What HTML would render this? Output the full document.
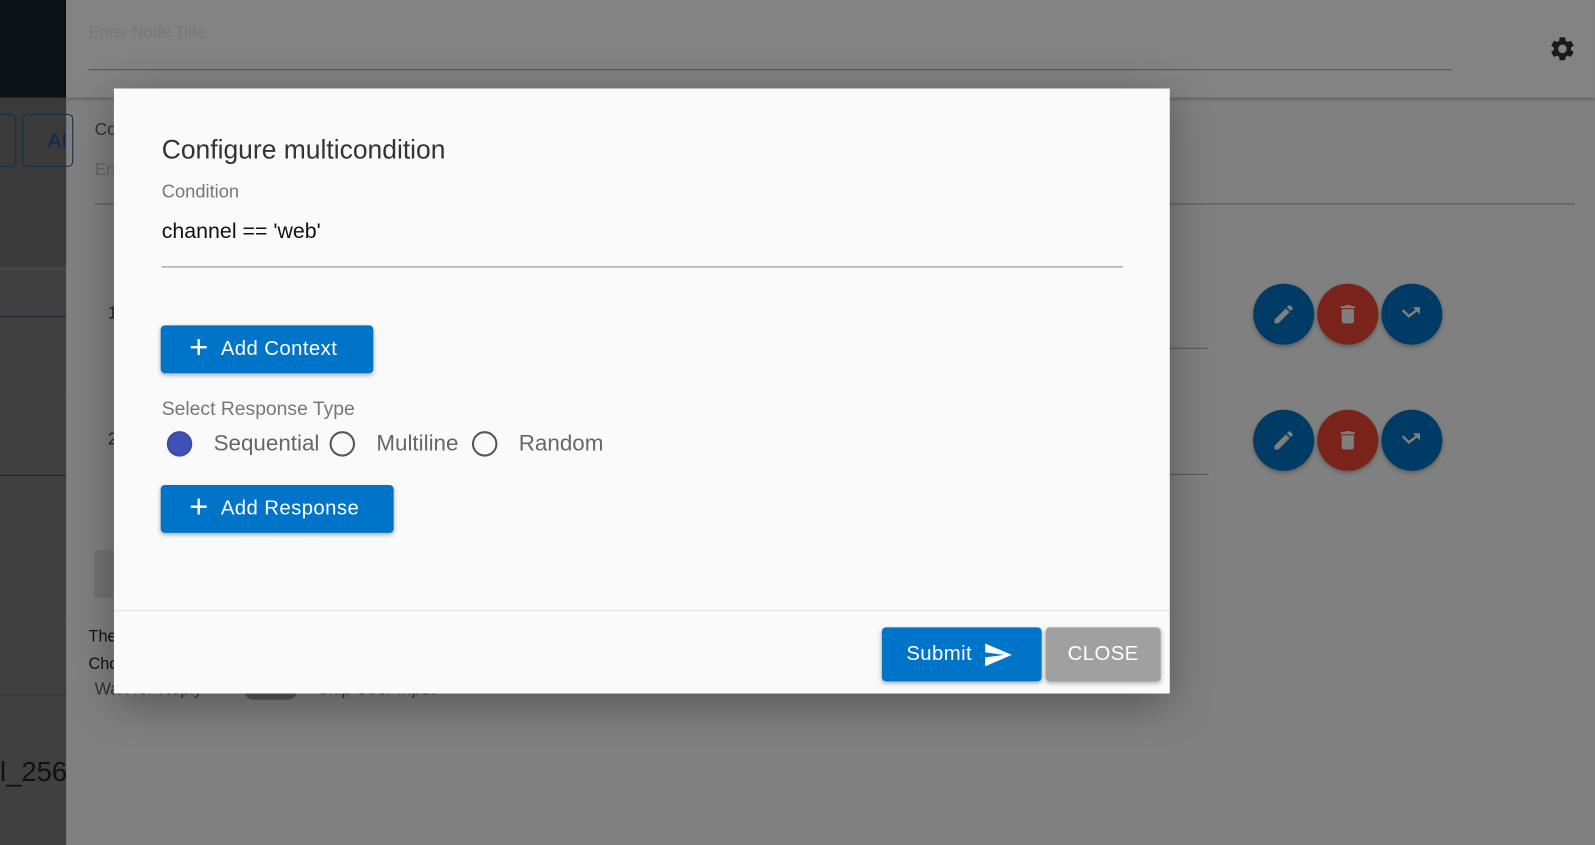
<!DOCTYPE html>
<html><head><style>
*{box-sizing:border-box;margin:0;padding:0}
html,body{width:1595px;height:845px;overflow:hidden;background:#808080;font-family:"Liberation Sans",sans-serif}
#w{position:absolute;left:0;top:0;width:1568px;height:831px;transform:scale(1.0172,1.0169);transform-origin:0 0}
.a{position:absolute}
.fab{position:absolute;width:60px;height:60px;border-radius:50%;box-shadow:0 2px 4px rgba(0,0,0,.3)}
.btn{position:absolute;background:#0074c8;color:#fff;border-radius:4px;font-size:20px;box-shadow:0 2px 4px rgba(0,0,0,.3);display:flex;align-items:center;letter-spacing:.4px}
</style></head><body><div id="w">
<div class="a" style="left:0;top:0;width:65px;height:96px;background:#0d1216"></div>
<div class="a" style="left:0;top:96px;width:65px;height:735px;background:#404040"></div>
<div class="a" style="left:0;top:96px;width:65px;height:165px;background:#3a3a3a"></div>
<div class="a" style="left:0;top:264px;width:65px;height:1px;background:#555"></div>
<div class="a" style="left:0;top:311px;width:65px;height:1px;background:#223"></div>
<div class="a" style="left:0;top:388px;width:65px;height:1px;background:#4a4a4a"></div>
<div class="a" style="left:0;top:467px;width:65px;height:1px;background:#223"></div>
<div class="a" style="left:0;top:610px;width:65px;height:1px;background:#4a4a4a"></div>
<div class="a" style="left:0;top:683px;width:65px;height:1px;background:#333"></div>
<div class="a" style="left:0;top:744px;font-size:27px;color:#111">l_256</div>
<div class="a" style="left:65px;top:0;width:1503px;height:96px;background:#838383;box-shadow:0 2px 4px rgba(0,0,0,.3)"></div>
<div class="a" style="left:87px;top:24px;font-size:16px;color:#777">Enter Node Title</div>
<div class="a" style="left:87px;top:68px;width:1340px;height:1px;background:#555"></div>
<svg class="a" style="left:1522px;top:34px" width="28" height="28" viewBox="0 0 24 24"><path fill="#1a1a1a" d="M19.14 12.94c.04-.3.06-.61.06-.94 0-.32-.02-.64-.07-.94l2.03-1.58a.49.49 0 0 0 .12-.61l-1.92-3.32a.49.49 0 0 0-.59-.22l-2.39.96c-.5-.38-1.030-.7-1.62-.94l-.36-2.540a.48.48 0 0 0-.48-.41h-3.84c-.24 0-.43.17-.47.41l-.36 2.54c-.59.24-1.13.57-1.62.94l-2.39-.96a.49.49 0 0 0-.59.22L2.74 8.87c-.12.21-.08.47.12.61l2.03 1.58c-.05.3-.09.63-.09.94s.02.64.07.94l-2.03 1.58a.49.49 0 0 0-.12.61l1.92 3.32c.12.22.37.29.59.22l2.39-.96c.5.38 1.03.7 1.62.94l.36 2.54c.05.24.24.41.48.41h3.84c.24 0 .44-.17.47-.41l.36-2.54c.59-.24 1.13-.56 1.62-.94l2.39.96c.22.08.47 0 .59-.22l1.92-3.320c.12-.22.07-.47-.12-.61l-2.01-1.58zM12 15.6A3.6 3.6 0 1 1 12 8.4a3.6 3.6 0 0 1 0 7.2z"/></svg>
<div class="a" style="left:-4px;top:112px;width:20px;height:52px;border:1px solid #0a3050;border-radius:5px"></div>
<div class="a" style="left:22px;top:112px;width:50px;height:52px;border:1px solid #0a3050;border-radius:5px;font-size:20px;color:#0a2a50;padding:15px 0 0 24px">AI</div>
<div class="a" style="left:93px;top:118px;font-size:17px;color:#333">Co</div>
<div class="a" style="left:93px;top:157px;font-size:17px;color:#666">En</div>
<div class="a" style="left:93px;top:200px;width:1455px;height:1px;background:#555"></div>
<div class="a" style="left:106px;top:298px;font-size:17px;color:#222">1</div>
<div class="a" style="left:106px;top:422px;font-size:17px;color:#222">2</div>
<div class="a" style="left:1150px;top:342px;width:38px;height:1px;background:#555"></div>
<div class="a" style="left:1150px;top:466px;width:38px;height:1px;background:#555"></div>
<div class="a" style="left:92px;top:541px;width:30px;height:47px;background:#747474;border-radius:4px"></div>
<div class="a" style="left:87px;top:613px;font-size:16px;color:#111;line-height:27px">The<br>Cho</div>
<div class="a" style="left:93px;top:668px;font-size:17px;color:#333">Wait for Reply</div>
<div class="a" style="left:240px;top:670px;width:52px;height:18px;border-radius:9px;background:#555"></div>
<div class="a" style="left:312px;top:668px;font-size:17px;color:#333">Skip User Input</div>
<div class="fab" style="left:1232px;top:279px;background:#003b66"><svg width="60" height="60" viewBox="-18 -18 60 60"><path fill="#7f7f7f" d="M3 17.25V21h3.75L17.81 9.94l-3.75-3.75L3 17.25zM20.71 7.04a1 1 0 0 0 0-1.41l-2.34-2.34a1 1 0 0 0-1.41 0l-1.83 1.83 3.75 3.75 1.83-1.83z"/></svg></div>
<div class="fab" style="left:1295px;top:279px;background:#7a231b"><svg width="60" height="60" viewBox="-18 -18 60 60"><path fill="#7f7f7f" d="M6 19c0 1.1.9 2 2 2h8c1.1 0 2-.9 2-2V7H6v12zM19 4h-3.5l-1-1h-5l-1 1H5v2h14V4z"/></svg></div>
<div class="fab" style="left:1358px;top:279px;background:#003b66"><svg width="60" height="60" viewBox="-18 -18 60 60"><path fill="none" stroke="#7f7f7f" stroke-width="2.4" d="M3 8l6 6 9-7"/><path fill="#7f7f7f" d="M13 5h7v7z"/></svg></div>
<div class="fab" style="left:1232px;top:403px;background:#003b66"><svg width="60" height="60" viewBox="-18 -18 60 60"><path fill="#7f7f7f" d="M3 17.25V21h3.75L17.81 9.94l-3.75-3.75L3 17.25zM20.71 7.04a1 1 0 0 0 0-1.41l-2.34-2.34a1 1 0 0 0-1.41 0l-1.83 1.83 3.75 3.75 1.83-1.83z"/></svg></div>
<div class="fab" style="left:1295px;top:403px;background:#7a231b"><svg width="60" height="60" viewBox="-18 -18 60 60"><path fill="#7f7f7f" d="M6 19c0 1.1.9 2 2 2h8c1.1 0 2-.9 2-2V7H6v12zM19 4h-3.5l-1-1h-5l-1 1H5v2h14V4z"/></svg></div>
<div class="fab" style="left:1358px;top:403px;background:#003b66"><svg width="60" height="60" viewBox="-18 -18 60 60"><path fill="none" stroke="#7f7f7f" stroke-width="2.4" d="M3 8l6 6 9-7"/><path fill="#7f7f7f" d="M13 5h7v7z"/></svg></div>

<div class="a" style="left:112px;top:87px;width:1038px;height:595px;background:#fafafa;box-shadow:0 10px 40px rgba(0,0,0,.35)">
 <div class="a" style="left:47px;top:45px;font-size:26px;color:#333">Configure multicondition</div>
 <div class="a" style="left:47px;top:91px;font-size:18px;color:#777">Condition</div>
 <div class="a" style="left:47px;top:129px;font-size:21px;color:#111">channel == 'web'</div>
 <div class="a" style="left:47px;top:175px;width:945px;height:1px;background:#888"></div>
 <div class="btn" style="left:46px;top:233px;width:209px;height:47px;padding-left:28px"><span style="font-size:32px;font-weight:300;margin-right:12px;margin-top:-4px">+</span>Add Context</div>
 <div class="a" style="left:47px;top:305px;font-size:19px;color:#777">Select Response Type</div>
 <div class="a" style="left:52px;top:337px;width:25px;height:25px;border-radius:50%;background:#3f51b5;border:2px solid #3a4aa8"></div>
 <div class="a" style="left:98px;top:336px;font-size:22px;color:#666">Sequential</div>
 <div class="a" style="left:212px;top:337px;width:25px;height:25px;border-radius:50%;border:2.5px solid #555"></div>
 <div class="a" style="left:258px;top:336px;font-size:22px;color:#666">Multiline</div>
 <div class="a" style="left:352px;top:337px;width:25px;height:25px;border-radius:50%;border:2.5px solid #555"></div>
 <div class="a" style="left:398px;top:336px;font-size:22px;color:#666">Random</div>
 <div class="btn" style="left:46px;top:390px;width:229px;height:47px;padding-left:28px"><span style="font-size:32px;font-weight:300;margin-right:12px;margin-top:-4px">+</span>Add Response</div>
 <div class="a" style="left:0;top:513px;width:1038px;height:1px;background:#e0e0e0"></div>
 <div class="btn" style="left:755px;top:530px;width:157px;height:53px;padding-left:24px">Submit <svg style="margin-left:8px" width="34" height="30" viewBox="0 0 24 24"><path fill="#fff" d="M2.01 21L23 12 2.01 3 2 10l15 2-15 2z"/></svg></div>
 <div class="btn" style="left:916px;top:530px;width:113px;height:53px;background:#a0a0a0;justify-content:center">CLOSE</div>
</div>
</div></body></html>
